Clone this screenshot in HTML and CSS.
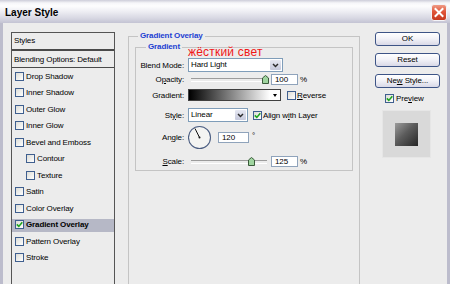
FILE: index.html
```html
<!DOCTYPE html>
<html>
<head>
<meta charset="utf-8">
<link rel="stylesheet" href="styles.css">
</head>
<body>
<div class="window">
  <div class="titlebar">
    <span class="title">Layer Style</span>
    <span class="close">
      <svg width="16" height="17" viewBox="0 0 16 17">
        <defs>
          <linearGradient id="cg" x1="0" y1="0" x2="0" y2="1">
            <stop offset="0" stop-color="#f0a08c"/>
            <stop offset="0.45" stop-color="#e0553a"/>
            <stop offset="1" stop-color="#c4381e"/>
          </linearGradient>
        </defs>
        <rect x="0.5" y="0.5" width="15" height="16" rx="2.5" fill="url(#cg)" stroke="#f4f4f8"/>
        <path d="M4.5 5 L11.5 12 M11.5 5 L4.5 12" stroke="#fff" stroke-width="2" stroke-linecap="square"/>
      </svg>
    </span>
  </div>
  <div class="frame">
    <div class="styles-panel">
      <div class="sp-head">Styles</div>
      <div class="sp-blend">Blending Options: Default</div>
      <div class="sp-item"><span class="cb"></span>Drop Shadow</div>
      <div class="sp-item"><span class="cb"></span>Inner Shadow</div>
      <div class="sp-item"><span class="cb"></span>Outer Glow</div>
      <div class="sp-item"><span class="cb"></span>Inner Glow</div>
      <div class="sp-item"><span class="cb"></span>Bevel and Emboss</div>
      <div class="sp-item sub"><span class="cb"></span>Contour</div>
      <div class="sp-item sub"><span class="cb"></span>Texture</div>
      <div class="sp-item"><span class="cb"></span>Satin</div>
      <div class="sp-item"><span class="cb"></span>Color Overlay</div>
      <div class="sp-item sel"><span class="cb"><svg width="7" height="7" viewBox="0 0 7 7"><path d="M0.8 3.4 L2.8 5.4 L6.3 1.2" stroke="#1fa51f" stroke-width="1.6" fill="none"/></svg></span>Gradient Overlay</div>
      <div class="sp-item"><span class="cb"></span>Pattern Overlay</div>
      <div class="sp-item"><span class="cb"></span>Stroke</div>
    </div>

    <fieldset class="group outer">
      <legend>Gradient Overlay</legend>
      <fieldset class="group inner">
        <legend>Gradient</legend>

        <div class="row r-blend">
          <span class="lbl">Blend Mode:</span>
          <div class="select w-blend"><span class="sel-text">Hard Light</span><span class="dd"><svg width="7" height="5" viewBox="0 0 7 5"><path d="M1 1 L3.5 3.6 L6 1" stroke="#2a2a2a" stroke-width="1.4" fill="none"/></svg></span></div>
        </div>

        <div class="row r-opacity">
          <span class="lbl">O<u>p</u>acity:</span>
          <div class="slider"><svg class="thumb t-op" width="7" height="9" viewBox="0 0 7 9"><path d="M0.5 8.5 L0.5 3 L3.5 0.5 L6.5 3 L6.5 8.5 Z" fill="#9fd49f" stroke="#3a5a3a"/></svg></div>
          <span class="num">100</span>
          <span class="unit">%</span>
        </div>

        <div class="row r-grad">
          <span class="lbl">Gradient:</span>
          <div class="gradbar"><span class="gradfill"></span><span class="gradarrow"></span></div>
          <span class="chk rev"><span class="cb"></span><span><u>R</u>everse</span></span>
        </div>

        <div class="row r-style">
          <span class="lbl">St<u>y</u>le:</span>
          <div class="select w-style"><span class="sel-text">Linear</span><span class="dd"><svg width="7" height="5" viewBox="0 0 7 5"><path d="M1 1 L3.5 3.6 L6 1" stroke="#2a2a2a" stroke-width="1.4" fill="none"/></svg></span></div>
          <span class="chk align"><span class="cb"><svg width="7" height="7" viewBox="0 0 7 7"><path d="M0.8 3.4 L2.8 5.4 L6.3 1.2" stroke="#1fa51f" stroke-width="1.6" fill="none"/></svg></span><span>Align w<u>i</u>th Layer</span></span>
        </div>

        <div class="row r-angle">
          <span class="lbl">An<u>g</u>le:</span>
          <svg class="dial" width="24" height="25" viewBox="0 0 24 25">
            <circle cx="11.5" cy="12.5" r="11" fill="#f4f4f2" stroke="#4c5e82" stroke-width="1.1"/>
            <path d="M11.5 12.5 L7 3.5" stroke="#111" stroke-width="1"/>
            <circle cx="11.5" cy="12.5" r="1" fill="#111"/>
          </svg>
          <span class="num angle">120</span>
          <span class="unit deg">°</span>
        </div>

        <div class="row r-scale">
          <span class="lbl"><u>S</u>cale:</span>
          <div class="slider"><svg class="thumb t-sc" width="7" height="9" viewBox="0 0 7 9"><path d="M0.5 8.5 L0.5 3 L3.5 0.5 L6.5 3 L6.5 8.5 Z" fill="#9fd49f" stroke="#3a5a3a"/></svg></div>
          <span class="num">125</span>
          <span class="unit">%</span>
        </div>
      </fieldset>
    </fieldset>

    <div class="side">
      <div class="btn">OK</div>
      <div class="btn">Reset</div>
      <div class="btn">Ne<u>w</u> Style...</div>
      <div class="preview-row"><span class="cb"><svg width="7" height="7" viewBox="0 0 7 7"><path d="M0.8 3.4 L2.8 5.4 L6.3 1.2" stroke="#1fa51f" stroke-width="1.6" fill="none"/></svg></span><span>Pre<u>v</u>iew</span></div>
      <div class="preview-box"><span class="swatch"></span></div>
    </div>
  </div>
  <div class="note">жёсткий свет</div>
</div>
</body>
</html>
```

FILE: styles.css
```css
* { box-sizing: border-box; }
html, body { margin: 0; padding: 0; }
body {
  width: 450px; height: 284px; overflow: hidden;
  background: #ececec;
  font-family: "Liberation Sans", Arial, sans-serif;
  font-size: 8px; color: #000;
  letter-spacing: -0.12px;
}
u { text-decoration-thickness: 1px; text-underline-offset: 1px; }
.window { position: relative; width: 450px; height: 284px; overflow: hidden; background: #ececec; }

.titlebar {
  height: 23px; display: flex; align-items: center; justify-content: space-between;
  padding: 2px 3px 0 5px;
  background: linear-gradient(#cdcdd9 0, #f6f6f9 3px, #fdfdfe 6px, #ececf2 12px, #d8d8e3 18px, #c3c3d3 23px);
}
.title { font-size: 10px; font-weight: bold; line-height: 12px; letter-spacing: 0; }
.close { display: flex; }

.frame {
  display: flex; align-items: flex-start;
  height: 261px; padding: 9px 0 0 8px;
  border-left: 3px solid #bcbccc; border-right: 3px solid #bcbccc;
}

/* styles list */
.styles-panel { flex: none; width: 104px; height: 300px; border: 1px solid #555; }
.sp-head { height: 18px; line-height: 16px; padding-left: 2px; border-bottom: 2px solid #4a4a4a; }
.sp-blend { height: 17px; line-height: 15px; padding: 1px 0 0 2px; border-bottom: 1px solid #4a4a4a; }
.sp-item { display: flex; align-items: center; gap: 2px; height: 16.5px; padding-left: 3px; white-space: nowrap; }
.sp-item.sub { padding-left: 14px; }
.sp-item.sel {
  font-weight: bold;
  background: linear-gradient(transparent 2.5px, #b6b8c6 2.5px, #b6b8c6 15.5px, transparent 15.5px);
}
.cb {
  flex: none; width: 9px; height: 9px;
  border: 1px solid #3f5f8f;
  background: linear-gradient(135deg, #dcdcd6, #fff);
  display: flex; align-items: center; justify-content: center;
}

/* fieldsets */
.group { margin: 0; padding: 0; border: 1px solid #c4c4c4; min-inline-size: 0; }
.group > legend { padding: 0 2px; font-weight: bold; color: #1c3fd2; line-height: 10px; font-size: 8px; }
.outer { flex: none; width: 232px; height: 262px; margin: -1px 0 0 13px; }
.outer > legend { margin-left: 9px; }
.inner { margin: 1px 6px 0; padding: 0 0 3px 0; }
.inner > legend { margin-left: 10px; }

.row { display: flex; align-items: center; white-space: nowrap; }
.lbl { flex: none; width: 48px; text-align: right; margin-right: 4px; }
.r-blend { height: 14px; margin-top: 6px; }
.r-opacity { height: 12px; margin-top: 1px; }
.r-grad { height: 12px; margin-top: 4px; }
.r-style { height: 14px; margin-top: 7px; }
.r-angle { height: 25px; margin-top: 3px; }
.r-scale { height: 12px; margin-top: 5px; }

.select { flex: none; display: flex; align-items: stretch; height: 14px; border: 1px solid #7f9db9; background: #fff; }
.sel-text { flex: 1; padding-left: 2px; line-height: 12px; }
.dd {
  flex: none; width: 11px; margin: 1px;
  background: linear-gradient(#e6e8f2, #c6c9dc);
  display: flex; align-items: center; justify-content: center; border-radius: 1px;
}
.w-blend { width: 95px; }
.w-style { width: 60px; }

.slider { position: relative; flex: none; width: 83px; height: 12px; }
.slider::before {
  content: ""; position: absolute; left: 3px; right: 4px; top: 5px; height: 2px;
  border-top: 1px solid #9c9c9c; border-bottom: 1px solid #fff;
}
.thumb { position: absolute; top: 2px; }
.t-op { left: 74px; }
.t-sc { left: 60px; }

.num { flex: none; width: 27px; height: 11px; border: 1px solid #8fa3bb; background: #fff; padding-left: 3px; line-height: 9px; }
.unit { margin-left: 2px; }
.num.angle { width: 31px; margin-left: 6px; }
.unit.deg { margin-left: 3px; align-self: flex-start; margin-top: 6px; }
.dial { flex: none; }

.gradbar { flex: none; display: flex; width: 93px; height: 12px; border: 1px solid #404040; background: #fff; }
.gradfill { flex: 1; background: linear-gradient(to right, #000, #fff); }
.gradarrow { flex: none; width: 10px; display: flex; align-items: center; justify-content: center; }
.gradarrow::before {
  content: ""; border-left: 2.5px solid transparent; border-right: 2.5px solid transparent; border-top: 3px solid #000;
}

.chk { display: flex; align-items: center; gap: 1px; }
.rev { margin-left: 6px; }
.align { margin-left: 5px; }

/* right column */
.side { flex: none; width: 65px; margin-left: 15px; display: flex; flex-direction: column; }
.btn {
  height: 14px; margin-bottom: 7px;
  border: 1px solid #3d5486; border-radius: 3px;
  background: linear-gradient(#fff, #f3f3f8 45%, #d9d9e7);
  text-align: center; line-height: 12px;
}
.preview-row { display: flex; align-items: center; gap: 2px; height: 9px; margin-top: -1px; padding-left: 10px; }
.preview-box {
  width: 49px; height: 48px; margin: 7px 0 0 7px;
  background: #d9d9d9; border: 1px solid #e6e6e6;
  display: flex; align-items: center; justify-content: center;
}
.swatch { width: 23px; height: 23px; background: linear-gradient(135deg, #9c9c9c 0%, #5c5c5c 45%, #262626 100%); }

.note {
  position: absolute; left: 188px; top: 46px;
  font-size: 12px; line-height: 12px; letter-spacing: 0.2px; color: #f01818;
}
```
